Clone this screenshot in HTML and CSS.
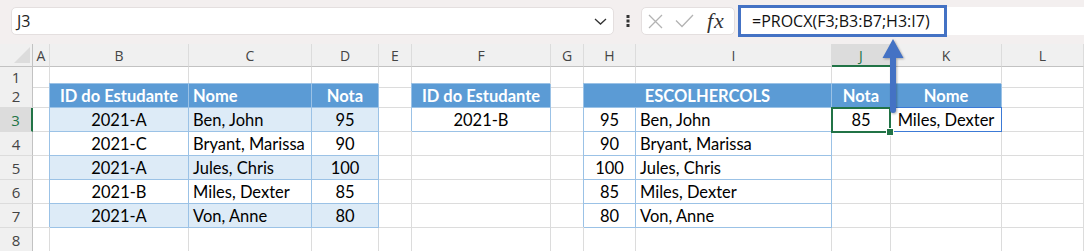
FILE: index.html
```html
<!DOCTYPE html>
<html lang="pt">
<head>
    <meta charset="UTF-8">
    <title>PROCX</title>
    <link rel="stylesheet" href="styles.css">
</head>
<body>
<div class="app">
    <div class="toolbar">
        <div class="namebox">
            <span>J3</span>
            <svg width="13" height="7" viewBox="0 0 13 7"><polyline points="1,1 6.5,6 12,1" fill="none" stroke="#333" stroke-width="1.3"/></svg>
        </div>
        <div class="dots">
            <svg width="4" height="12" viewBox="0 0 4 12"><rect x="0.5" y="0" width="3" height="3" fill="#333"/><rect x="0.5" y="4.5" width="3" height="3" fill="#333"/><rect x="0.5" y="9" width="3" height="3" fill="#333"/></svg>
        </div>
        <div class="fxbox">
            <svg class="ico-x" width="15" height="15" viewBox="0 0 15 15"><path d="M1 1 L14 14 M14 1 L1 14" stroke="#b3b3b3" stroke-width="1.3" fill="none"/></svg>
            <svg class="ico-ok" width="19" height="14" viewBox="0 0 19 14"><polyline points="1,6.5 7,12.5 18,1" stroke="#b3b3b3" stroke-width="1.3" fill="none"/></svg>
            <i class="fx">fx</i>
        </div>
        <div class="formula">
            <span class="hl">=PROCX(F3;B3:B7;H3:I7)</span>
        </div>
    </div>

    <div class="sheet">
        <div class="row colhead">
            <div class="corner"><span class="tri"></span></div>
            <div>A</div><div>B</div><div>C</div><div>D</div><div>E</div><div>F</div>
            <div>G</div><div>H</div><div>I</div><div class="on">J</div><div>K</div><div>L</div>
        </div>

        <div class="row r1">
            <div class="rh">1</div>
            <div></div><div></div><div></div><div></div><div></div><div></div>
            <div></div><div></div><div></div><div></div><div></div><div></div>
        </div>

        <div class="row">
            <div class="rh">2</div>
            <div></div>
            <div class="hd c">ID do Estudante</div>
            <div class="hd">Nome</div>
            <div class="hd c">Nota</div>
            <div></div>
            <div class="hd c">ID do Estudante</div>
            <div></div>
            <div class="hd c span2">ESCOLHERCOLS</div>
            <div class="hd c">Nota</div>
            <div class="hd c">Nome</div>
            <div></div>
        </div>

        <div class="row">
            <div class="rh on">3</div>
            <div></div>
            <div class="bd c">2021-A</div>
            <div class="bd">Ben, John</div>
            <div class="bd c">95</div>
            <div></div>
            <div class="tb c">2021-B</div>
            <div></div>
            <div class="tb c">95</div>
            <div class="tb">Ben, John</div>
            <div class="c sel">85</div>
            <div class="c spill">Miles, Dexter</div>
            <div></div>
        </div>

        <div class="row">
            <div class="rh">4</div>
            <div></div>
            <div class="tb c">2021-C</div>
            <div class="tb">Bryant, Marissa</div>
            <div class="tb c">90</div>
            <div></div><div></div><div></div>
            <div class="tb c">90</div>
            <div class="tb">Bryant, Marissa</div>
            <div></div><div></div><div></div>
        </div>

        <div class="row">
            <div class="rh">5</div>
            <div></div>
            <div class="bd c">2021-A</div>
            <div class="bd">Jules, Chris</div>
            <div class="bd c">100</div>
            <div></div><div></div><div></div>
            <div class="tb c">100</div>
            <div class="tb">Jules, Chris</div>
            <div></div><div></div><div></div>
        </div>

        <div class="row">
            <div class="rh">6</div>
            <div></div>
            <div class="tb c">2021-B</div>
            <div class="tb">Miles, Dexter</div>
            <div class="tb c">85</div>
            <div></div><div></div><div></div>
            <div class="tb c">85</div>
            <div class="tb">Miles, Dexter</div>
            <div></div><div></div><div></div>
        </div>

        <div class="row">
            <div class="rh">7</div>
            <div></div>
            <div class="bd c">2021-A</div>
            <div class="bd">Von, Anne</div>
            <div class="bd c">80</div>
            <div></div><div></div><div></div>
            <div class="tb c">80</div>
            <div class="tb">Von, Anne</div>
            <div></div><div></div><div></div>
        </div>

        <div class="row">
            <div class="rh">8</div>
            <div></div><div></div><div></div><div></div><div></div><div></div>
            <div></div><div></div><div></div><div></div><div></div><div></div>
        </div>
    </div>

    <svg class="arrow" width="26" height="80" viewBox="0 0 26 80">
        <path d="M13 2 L23.5 21 L16 21 L16 73 A3 3 0 0 1 10 73 L10 21 L2.5 21 Z" fill="#4472c4"/>
    </svg>
</div>
</body>
</html>
```

FILE: styles.css
```css
*{
    box-sizing: border-box;
}
body{
    margin: 0;
    background-color: #fff;
    overflow: hidden;
}
.app{
    position: relative;
    width: 1084px;
    height: 251px;
    overflow: hidden;
}

/* barra de formulas */
.toolbar{
    display: flex;
    align-items: flex-start;
    height: 44px;
    padding: 7px 0 0 11px;
    background-color: #f3efef;
    font-family: "Open Sans", sans-serif;
    font-size: 16px;
    color: #222;
}
.namebox{
    width: 603px;
    height: 28px;
    display: flex;
    align-items: center;
    justify-content: space-between;
    padding: 0 6px 0 5px;
    background-color: #fff;
    border: 1px solid #e4dfdf;
    border-radius: 5px;
}
.dots{
    width: 27px;
    height: 28px;
    display: flex;
    align-items: center;
    justify-content: center;
}
.fxbox{
    width: 94px;
    height: 28px;
    display: flex;
    align-items: center;
    padding-left: 6px;
    background-color: #fff;
    border: 1px solid #e4dfdf;
    border-radius: 5px;
}
.ico-x{
    margin-right: 12px;
}
.ico-ok{
    margin-right: 13px;
}
.fx{
    font-family: "Liberation Serif", serif;
    font-size: 22px;
    line-height: 1;
    color: #333;
    letter-spacing: 1px;
}
.formula{
    flex: 1;
    height: 28px;
    margin-left: 3px;
    display: flex;
    align-items: center;
    background-color: #fff;
    border-radius: 5px 0 0 5px;
}
.hl{
    height: 32px;
    display: flex;
    align-items: center;
    padding: 0 14px 0 11px;
    border: 3px solid #4472c4;
    color: #111;
}

/* grade */
.row{
    display: grid;
    grid-template-columns: 33px 17px 139px 123px 67px 33px 139px 33px 52px 196px 59px 111px 1fr;
    height: 24px;
}
.row > div{
    display: flex;
    align-items: center;
    padding: 1px 4px 0;
    border-right: 1px solid #dcdcdc;
    border-bottom: 1px solid #dcdcdc;
    font-family: Lato, sans-serif;
    font-size: 16.5px;
    color: #000;
    white-space: nowrap;
}
.r1{
    height: 17px;
}
.colhead{
    height: 23px;
}
.colhead > div{
    justify-content: center;
    background-color: #f0f0f0;
    border-bottom-color: #c2c2c2;
    font-family: "Open Sans", sans-serif;
    font-size: 14px;
    color: #444;
}
.colhead > .on{
    background-color: #dcdcdc;
    border-bottom: 2px solid #217346;
    color: #217346;
}
.corner{
    position: relative;
    border-right-color: #c2c2c2 !important;
}
.tri{
    position: absolute;
    right: 2px;
    bottom: 3px;
    width: 0;
    height: 0;
    border-left: 16px solid transparent;
    border-bottom: 16px solid #dcdcdc;
}
.row > .rh{
    justify-content: center;
    padding: 0;
    background-color: #f0f0f0;
    border-right-color: #c2c2c2;
    font-family: "Open Sans", sans-serif;
    font-size: 15px;
    color: #444;
}
.row > .rh.on{
    background-color: #dcdcdc;
    border-right: 2px solid #217346;
    color: #217346;
}

.row > .c{
    justify-content: center;
}
.row > .span2{
    grid-column: span 2;
}

/* tabelas */
.row > .hd,
.row > .bd,
.row > .tb{
    border-color: #9bc2e6;
    box-shadow: -1px -1px 0 #9bc2e6;
}
.row > .hd{
    background-color: #5b9bd5;
    color: #fff;
    font-weight: 700;
}
.row > .bd{
    background-color: #ddebf7;
}
.row > .tb{
    background-color: #fff;
}

/* celula selecionada */
.sel{
    position: relative;
    z-index: 2;
}
.sel::before{
    content: "";
    position: absolute;
    top: -1px;
    left: -1px;
    right: -1px;
    bottom: -2px;
    border: 2px solid #217346;
}
.sel::after{
    content: "";
    position: absolute;
    right: -4px;
    bottom: -5px;
    width: 6px;
    height: 6px;
    background-color: #217346;
    border: 1px solid #fff;
}
.spill{
    position: relative;
}
.spill::before{
    content: "";
    position: absolute;
    top: -1px;
    left: -1px;
    right: -1px;
    bottom: -1px;
    border: 1px solid #3c7ad6;
}

.arrow{
    position: absolute;
    left: 880px;
    top: 37px;
    z-index: 5;
    filter: drop-shadow(1px 1px 1px rgba(0, 0, 0, 0.3));
}
```
